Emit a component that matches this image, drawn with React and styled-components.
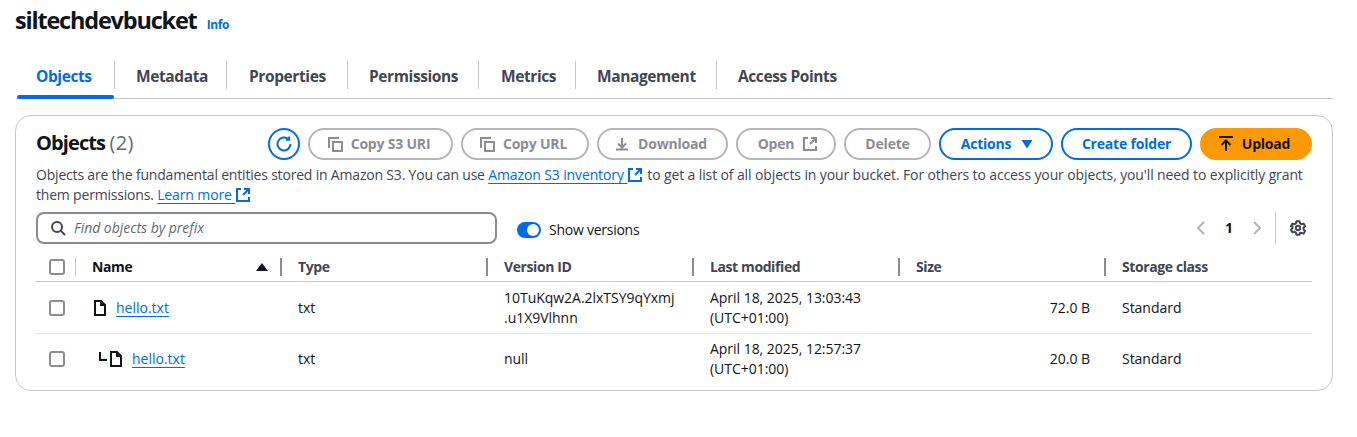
import React from 'react';
import styled, { createGlobalStyle } from 'styled-components';

const Global = createGlobalStyle`
  * { box-sizing: border-box; }
  html, body { margin: 0; padding: 0; background: #ffffff; }
  body {
    font-family: "Open Sans", "Liberation Sans", sans-serif;
    font-size: 14px;
    line-height: 20px;
    color: #0f141a;
  }
`;

const Page = styled.div`
  width: 1357px;
  height: 437px;
  padding: 5px 24px 0 15px;
  overflow: hidden;
`;

const TitleRow = styled.div`
  display: flex;
  align-items: baseline;
  gap: 10px;
  height: 55px;
`;

const Title = styled.h1`
  margin: 0;
  font-size: 23.5px;
  line-height: 30px;
  font-weight: 700;
  letter-spacing: -1.2px;
`;

const InfoLink = styled.a`
  color: #006ce0;
  font-size: 12px;
  font-weight: 700;
  letter-spacing: -0.35px;
`;

const Tabs = styled.div`
  display: flex;
  margin-left: 1px;
  height: 39px;
  border-bottom: 1px solid #c6c6cd;
`;

const Tab = styled.div`
  position: relative;
  width: ${p => p.$w}px;
  height: 38px;
  flex: none;
  padding: 6px 0 0 ${p => p.$pad}px;
  font-size: 15.5px;
  line-height: 20px;
  font-weight: 700;
  letter-spacing: -0.4px;
  white-space: nowrap;
  color: ${p => (p.$active ? '#006ce0' : '#424650')};

  &::before {
    content: '';
    position: absolute;
    right: 0;
    top: 1px;
    height: 28px;
    width: 1px;
    background: #c6c6cd;
    display: ${p => (p.$last ? 'none' : 'block')};
  }

  &::after {
    content: '';
    position: absolute;
    left: 1px;
    right: 1px;
    bottom: -1px;
    height: 4px;
    border-radius: 2px;
    background: #006ce0;
    display: ${p => (p.$active ? 'block' : 'none')};
  }
`;

const Card = styled.section`
  margin-top: 16px;
  width: 1318px;
  height: 276px;
  border: 1px solid #c6c6cd;
  border-radius: 16px;
  padding: 12px 20px 0;
`;

const CardHeader = styled.div`
  display: flex;
  align-items: center;
  justify-content: space-between;
  height: 32px;
`;

const CardTitle = styled.h2`
  margin: 0 0 2px;
  font-size: 20px;
  line-height: 24px;
  font-weight: 700;
  letter-spacing: -0.9px;

  span {
    font-weight: 400;
    color: #656871;
    letter-spacing: 0.4px;
  }
`;

const Actions = styled.div`
  display: flex;
  gap: 8px;
`;

const RoundButton = styled.button`
  width: 32px;
  height: 32px;
  padding: 0;
  display: flex;
  align-items: center;
  justify-content: center;
  border: 2px solid #006ce0;
  border-radius: 50%;
  background: #ffffff;
  color: #006ce0;
`;

const Button = styled.button`
  display: flex;
  align-items: center;
  justify-content: center;
  gap: 8px;
  width: ${p => p.$w}px;
  height: 32px;
  padding: 0 ${p => (p.$icon === 'left' ? 4 : 0)}px 1px ${p => (p.$icon === 'right' ? 4 : 0)}px;
  border-radius: 16px;
  border: 2px solid ${p => (p.$primary ? '#ff9900' : p.$disabled ? '#b4b4bb' : '#006ce0')};
  background: ${p => (p.$primary ? '#ff9900' : '#ffffff')};
  color: ${p => (p.$primary ? '#0f141a' : p.$disabled ? '#8c8c94' : '#006ce0')};
  font-family: inherit;
  font-size: 14px;
  font-weight: 700;
  letter-spacing: -0.2px;
  white-space: nowrap;

  svg { margin-top: 1px; }
`;

const Description = styled.p`
  margin: 5px 0 0;
  height: 39px;
  width: 1272px;
  color: #424650;
  font-size: 14px;
  line-height: 20px;
  letter-spacing: -0.12px;
  white-space: nowrap;
`;

const Lead = styled.span`
  letter-spacing: -0.19px;
`;

const Link = styled.a`
  color: #006ce0;
  text-decoration: underline;
  text-underline-offset: 3px;
  text-decoration-thickness: 1px;
`;

const ExternalIcon = styled.svg`
  width: 16px;
  height: 16px;
  vertical-align: -3px;
  margin-right: 4px;
`;

const Toolbar = styled.div`
  display: flex;
  align-items: center;
  margin-top: 8px;
  height: 32px;
`;

const Search = styled.div`
  display: flex;
  align-items: center;
  gap: 8px;
  width: 461px;
  height: 32px;
  padding-left: 12px;
  border: 2px solid #8c8c94;
  border-radius: 8px;
  color: #656871;
  font-style: italic;
  font-size: 14px;
  letter-spacing: -0.03px;

  svg { flex: none; color: #424650; }
`;

const ToggleWrap = styled.div`
  display: flex;
  align-items: center;
  gap: 8px;
  margin: 4px 0 0 20px;
  letter-spacing: -0.25px;
`;

const Toggle = styled.span`
  position: relative;
  width: 24px;
  height: 16px;
  border-radius: 8px;
  background: #006ce0;

  &::after {
    content: '';
    position: absolute;
    top: 2px;
    right: 2px;
    width: 12px;
    height: 12px;
    border-radius: 50%;
    background: #ffffff;
  }
`;

const Pager = styled.div`
  display: flex;
  align-items: center;
  margin-left: auto;
  margin-right: 6px;
  height: 32px;
  color: #b4b4bb;
`;

const PageNumber = styled.span`
  width: 40px;
  text-align: center;
  color: #0f141a;
  font-weight: 700;
`;

const PagerDivider = styled.span`
  width: 1px;
  height: 32px;
  margin: 0 14px 0 10px;
  background: #c6c6cd;
`;

const Row = styled.div`
  display: grid;
  grid-template-columns: 40px repeat(6, 1fr);
  height: ${p => p.$h}px;
  align-items: center;
  padding-top: ${p => (p.$head ? 8 : 0)}px;
  border-bottom: 1px solid ${p => (p.$head ? '#c6c6cd' : p.$last ? 'transparent' : '#e8e8ec')};
`;

const Head = styled.div`
  display: flex;
  align-items: center;
  justify-content: space-between;
  position: relative;
  height: 100%;
  padding: 1px 14px 0 16px;
  font-weight: 700;
  letter-spacing: -0.4px;
  color: ${p => (p.$strong ? '#0f141a' : '#424650')};

  &::after {
    content: '';
    position: absolute;
    right: 0;
    top: 6px;
    width: 2px;
    height: 18px;
    background: #8c8c94;
    display: ${p => (p.$end ? 'none' : 'block')};
  }
`;

const CheckCell = styled.div`
  position: relative;
  height: 100%;
  display: flex;
  align-items: center;
  padding-left: 13px;

  &::after {
    content: '';
    position: absolute;
    right: 0;
    top: 6px;
    width: 1px;
    height: 18px;
    background: #c6c6cd;
    display: ${p => (p.$head ? 'block' : 'none')};
  }
`;

const Checkbox = styled.span`
  width: 16px;
  height: 16px;
  border: 2px solid #8c8c94;
  border-radius: 3px;
  background: #ffffff;
`;

const Cell = styled.div`
  padding: 0 16px;
  text-align: ${p => (p.$right ? 'right' : 'left')};
  letter-spacing: -0.03px;
  white-space: nowrap;
`;

const NameCell = styled.div`
  display: flex;
  align-items: center;
  gap: 8px;
  padding-left: ${p => (p.$nested ? 23 : 16)}px;
  letter-spacing: 0;

  svg { flex: none; }
`;

const NestedIcons = styled.span`
  display: flex;
  align-items: center;
  gap: 1px;
`;

const ExternalLink = () => (
  <ExternalIcon viewBox="0 0 16 16" fill="none" stroke="#006ce0" strokeWidth="2">
    <path d="M6 2H2v12h12v-4" />
    <path d="M9 2h5v5M14 2 8 8" />
  </ExternalIcon>
);

const CopyIcon = () => (
  <svg width="16" height="16" viewBox="0 0 16 16" fill="none" stroke="currentColor" strokeWidth="2">
    <path d="M6 6h9v9H6z" />
    <path d="M2 12V2h10" />
  </svg>
);

const FileIcon = () => (
  <svg width="16" height="16" viewBox="0 0 16 16" fill="none" stroke="#0f141a" strokeWidth="2">
    <path d="M3 1h6l4 4v10H3z" />
    <path d="M9 1v4h4" />
  </svg>
);

const columns = ['Type', 'Version ID', 'Last modified', 'Size', 'Storage class'];

const rows = [
  {
    version: ['10TuKqw2A.2lxTSY9qYxmj', '.u1X9Vlhnn'],
    modified: 'April 18, 2025, 13:03:43',
    size: '72.0 B',
    height: 52,
  },
  {
    version: ['null'],
    modified: 'April 18, 2025, 12:57:37',
    size: '20.0 B',
    height: 51,
    nested: true,
  },
];

export default function App() {
  return (
    <Page>
      <Global />
      <TitleRow>
        <Title>siltechdevbucket</Title>
        <InfoLink>Info</InfoLink>
      </TitleRow>

      <Tabs>
        <Tab $w={99} $pad={20} $active>Objects</Tab>
        <Tab $w={112} $pad={21}>Metadata</Tab>
        <Tab $w={121} $pad={22}>Properties</Tab>
        <Tab $w={131} $pad={21}>Permissions</Tab>
        <Tab $w={97} $pad={22}>Metrics</Tab>
        <Tab $w={141} $pad={21}>Management</Tab>
        <Tab $w={140} $pad={21} $last>Access Points</Tab>
      </Tabs>

      <Card>
        <CardHeader>
          <CardTitle>Objects <span>(2)</span></CardTitle>
          <Actions>
            <RoundButton>
              <svg width="16" height="16" viewBox="0 0 16 16" fill="none" stroke="currentColor" strokeWidth="2">
                <path d="M14.5 8A6.5 6.5 0 1 1 12.4 3.2" />
                <path d="M13.2 .5v3.2H10" />
              </svg>
            </RoundButton>
            <Button $w={145} $icon="left" $disabled><CopyIcon />Copy S3 URI</Button>
            <Button $w={128} $icon="left" $disabled><CopyIcon />Copy URL</Button>
            <Button $w={131} $icon="left" $disabled>
              <svg width="16" height="16" viewBox="0 0 16 16" fill="none" stroke="currentColor" strokeWidth="2">
                <path d="M8 2v9M4 7.5 8 11.5l4-4M2 13.5h12" />
              </svg>
              Download
            </Button>
            <Button $w={100} $icon="right" $disabled>
              Open
              <svg width="16" height="16" viewBox="0 0 16 16" fill="none" stroke="currentColor" strokeWidth="2">
                <path d="M6 2H2v12h12v-4" />
                <path d="M9 2h5v5M14 2 8 8" />
              </svg>
            </Button>
            <Button $w={87} $disabled>Delete</Button>
            <Button $w={114} $icon="right">
              Actions
              <svg width="16" height="16" viewBox="0 0 16 16" fill="currentColor">
                <path d="M2.5 4h11L8 12.5z" />
              </svg>
            </Button>
            <Button $w={131}>Create folder</Button>
            <Button $w={112} $icon="left" $primary>
              <svg width="16" height="16" viewBox="0 0 16 16" fill="none" stroke="currentColor" strokeWidth="2">
                <path d="M1 1h14M8 15V4.5M3.5 9 8 4.5 12.5 9" />
              </svg>
              Upload
            </Button>
          </Actions>
        </CardHeader>

        <Description>
          <Lead>Objects are the fundamental entities stored in Amazon S3. You can use </Lead>
          <Link>Amazon S3 inventory </Link><ExternalLink />
          to get a list of all objects in your bucket. For others to access your objects, you'll need to explicitly grant
          <br />
          <Lead>them permissions. </Lead><Link>Learn more </Link><ExternalLink />
        </Description>

        <Toolbar>
          <Search>
            <svg width="16" height="16" viewBox="0 0 16 16" fill="none" stroke="currentColor" strokeWidth="2">
              <circle cx="7" cy="7" r="5" />
              <path d="m11 11 4 4" />
            </svg>
            Find objects by prefix
          </Search>
          <ToggleWrap>
            <Toggle />
            Show versions
          </ToggleWrap>
          <Pager>
            <svg width="16" height="16" viewBox="0 0 16 16" fill="none" stroke="currentColor" strokeWidth="2">
              <path d="M11 2 5 8l6 6" />
            </svg>
            <PageNumber>1</PageNumber>
            <svg width="16" height="16" viewBox="0 0 16 16" fill="none" stroke="currentColor" strokeWidth="2">
              <path d="m5 2 6 6-6 6" />
            </svg>
            <PagerDivider />
            <svg width="16" height="16" viewBox="0 0 24 24" fill="none" stroke="#424650" strokeWidth="3" strokeLinejoin="round">
              <path d="M9.7 2h4.6l.7 3 2.3 1.3 3-.9 2.3 4-2.3 2.1v2.9l2.3 2.1-2.3 4-3-.9L15 19l-.7 3H9.7L9 19l-2.3-1.4-3 .9-2.3-4 2.3-2.1v-2.9L1.4 9.4l2.3-4 3 .9L9 5z" />
              <circle cx="12" cy="12" r="3.2" />
            </svg>
          </Pager>
        </Toolbar>

        <Row $h={38} $head>
          <CheckCell $head><Checkbox /></CheckCell>
          <Head $strong>
            Name
            <svg width="12" height="12" viewBox="0 0 12 12" fill="#0f141a">
              <path d="M0 10 6 2l6 8z" />
            </svg>
          </Head>
          {columns.map((c, i) => (
            <Head key={c} $end={i === columns.length - 1}>{c}</Head>
          ))}
        </Row>

        {rows.map((r, i) => (
          <Row key={r.modified} $h={r.height} $last={i === rows.length - 1}>
            <CheckCell><Checkbox /></CheckCell>
            <NameCell $nested={r.nested}>
              {r.nested ? (
                <NestedIcons>
                  <svg width="8" height="16" viewBox="0 0 8 16" fill="none" stroke="#0f141a" strokeWidth="2">
                    <path d="M1 1v8h7" />
                  </svg>
                  <FileIcon />
                </NestedIcons>
              ) : <FileIcon />}
              <Link>hello.txt</Link>
            </NameCell>
            <Cell>txt</Cell>
            <Cell>{r.version.map(v => <div key={v}>{v}</div>)}</Cell>
            <Cell>{r.modified}<br />(UTC+01:00)</Cell>
            <Cell $right>{r.size}</Cell>
            <Cell>Standard</Cell>
          </Row>
        ))}
      </Card>
    </Page>
  );
}
